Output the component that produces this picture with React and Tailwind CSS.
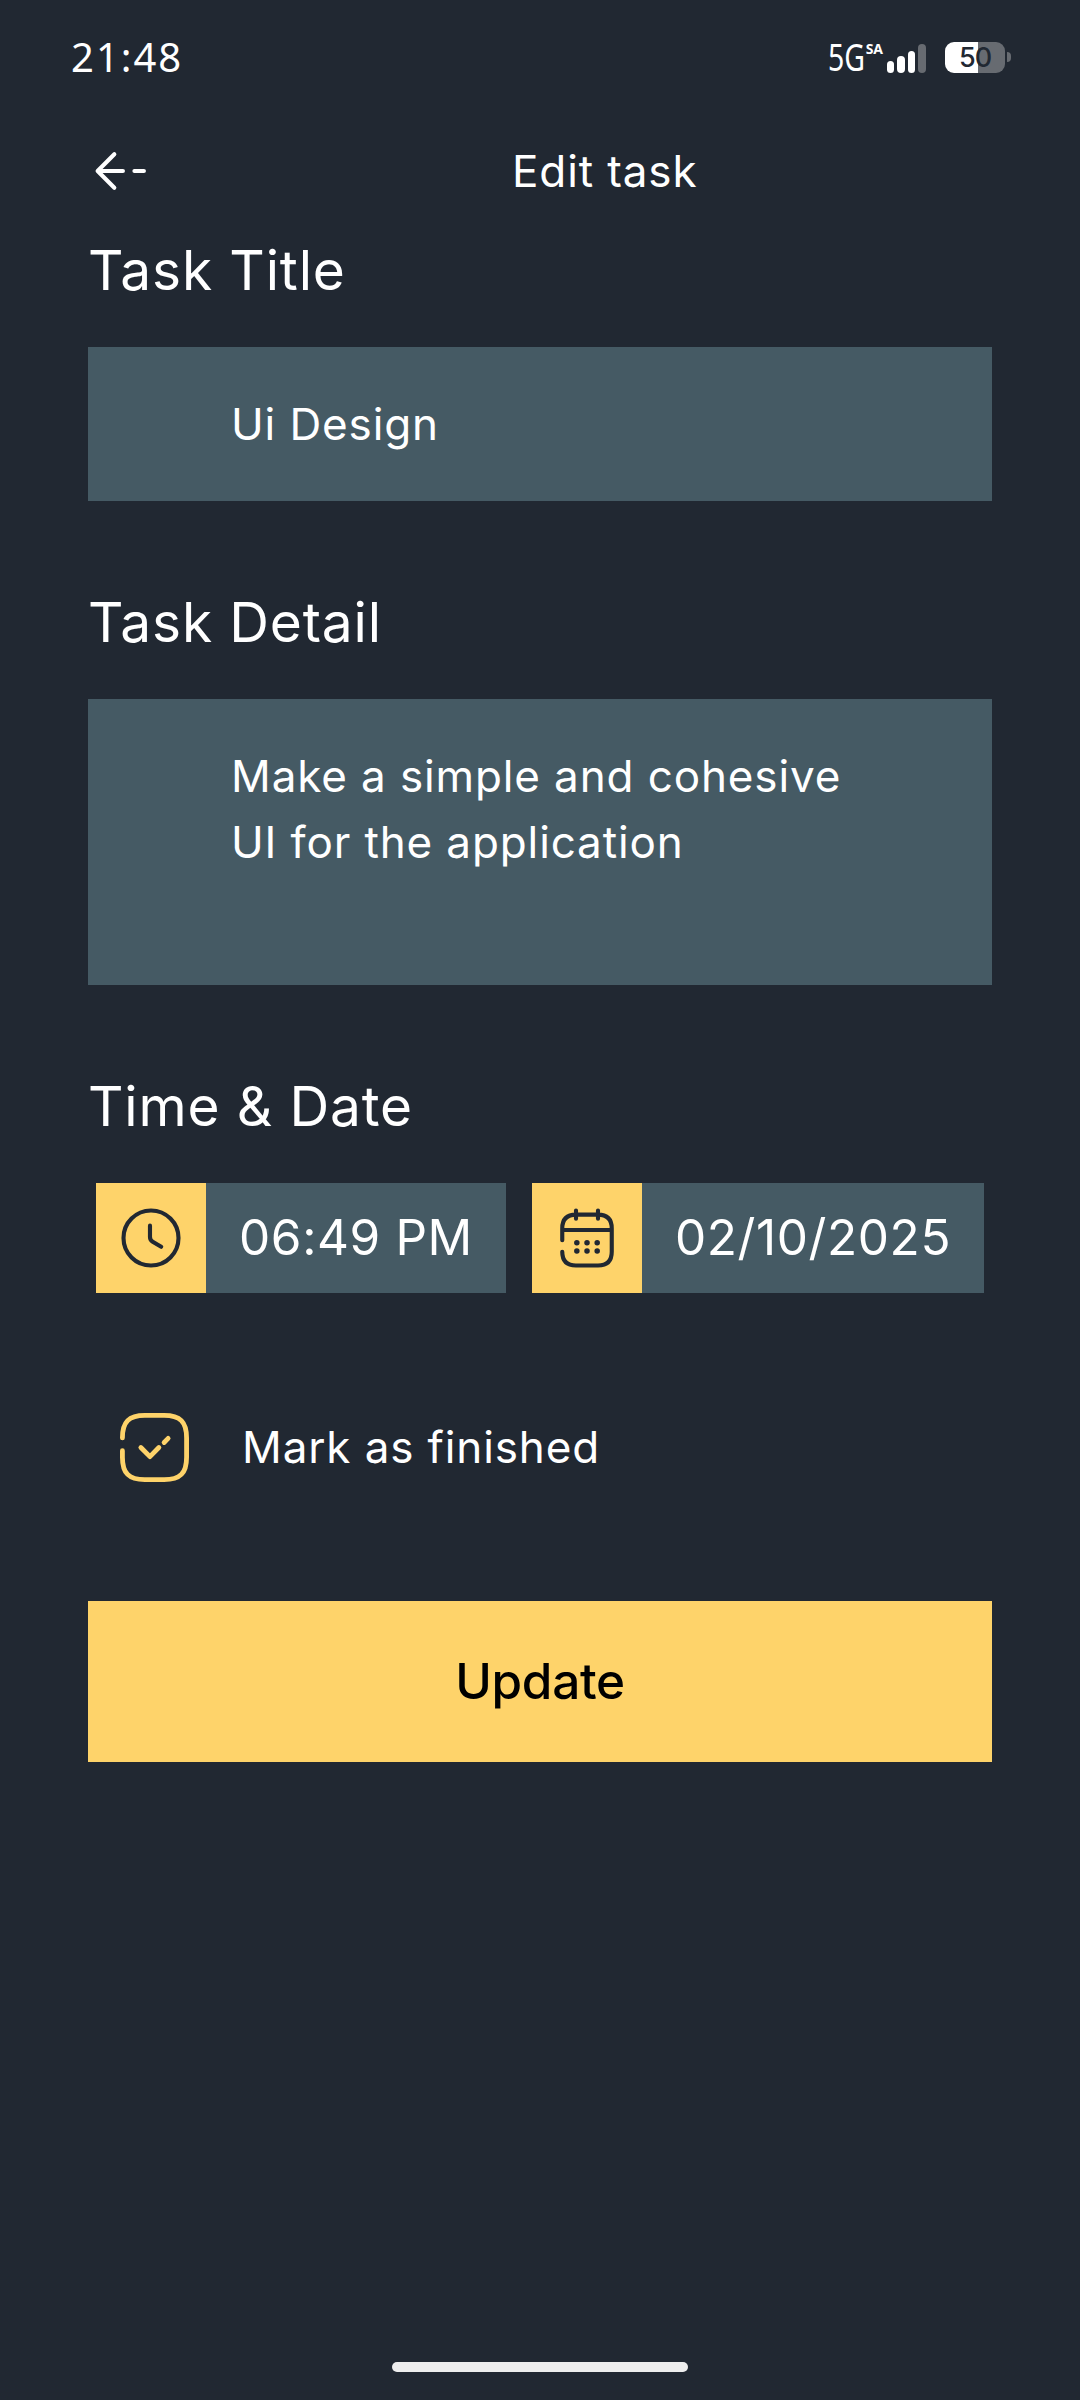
function Icon({ className, children }) {
  return (
    <svg
      viewBox="0 0 24 24"
      fill="none"
      stroke="currentColor"
      strokeWidth="1.5"
      strokeLinecap="round"
      strokeLinejoin="round"
      className={className}
    >
      {children}
    </svg>
  );
}

function StatusBar() {
  return (
    <div className="flex h-[114px] items-center justify-between pl-[71px] pr-[69px]">
      <span className="font-['Noto_Sans'] text-[40px] leading-none tracking-[2px]">21:48</span>
      <div className="flex h-[31px] items-end">
        <span className="w-[38px] origin-left scale-x-[0.75] whitespace-nowrap font-['Noto_Sans'] text-[38px] leading-[34px]">
          5G
        </span>
        <span className="mr-[3px] w-[18px] self-start font-['Noto_Sans'] text-[14px] font-bold leading-[14px]">SA</span>
        <div className="flex items-end gap-[3px]">
          <i className="h-[12px] w-[7.6px] rounded-full bg-white" />
          <i className="h-[17px] w-[7.6px] rounded-full bg-white" />
          <i className="h-[22px] w-[7.6px] rounded-full bg-white" />
          <i className="h-[29px] w-[7.6px] rounded-full bg-[#676b71]" />
        </div>
        <div className="ml-[19px] flex h-[31px] w-[60px] items-center justify-center rounded-[9px] bg-linear-to-r from-white from-55% to-[#676b71] to-55% text-[27px] font-medium leading-none tracking-[-1px] text-[#212832]">
          50
        </div>
        <i className="ml-[2px] h-[10px] w-[4px] self-center rounded-r-full bg-[#676b71]" />
      </div>
    </div>
  );
}

function Label({ children }) {
  return <h2 className="flex h-[84px] items-center text-[55px] leading-none tracking-[0.85px]">{children}</h2>;
}

function Picker({ icon, value, className }) {
  return (
    <div className={className}>
      <div className="flex size-[110px] shrink-0 items-center justify-center bg-[#fed36a] text-[#212832]">{icon}</div>
      <span className="flex-1 whitespace-nowrap text-center text-[49.5px] leading-none tracking-[0.6px]">{value}</span>
    </div>
  );
}

export default function App() {
  return (
    <div className="flex h-[2400px] w-[1080px] flex-col overflow-hidden bg-[#212832] font-['Inter',sans-serif] text-white">
      <StatusBar />
      <header className="flex h-[114px] items-center pl-[88px]">
        <Icon className="size-[66px]">
          <path d="M9.57 5.93 3.5 12l6.07 6.07M12.7 12H3.67M20.33 12h-3.45" />
        </Icon>
        <h1 className="ml-[358px] text-[44px] leading-none tracking-[0.88px]">Edit task</h1>
      </header>

      <main className="flex flex-col px-[88px]">
        <Label>Task Title</Label>
        <div className="mb-[79px] mt-[35px] flex h-[154px] items-center bg-[#455a64] pl-[143px] text-[44px] leading-none tracking-[0.88px]">
          Ui Design
        </div>

        <Label>Task Detail</Label>
        <div className="mb-[79px] mt-[35px] h-[286px] bg-[#455a64] pl-[143px] pt-[44px] text-[44px] leading-[66px] tracking-[0.88px]">
          Make a simple and cohesive
          <br />
          UI for the application
        </div>

        <Label>Time &amp; Date</Label>
        <div className="mt-[35px] flex gap-[26px] px-[8px]">
          <Picker
            className="flex h-[110px] w-[410px] items-center bg-[#455a64]"
            value="06:49 PM"
            icon={
              <Icon className="size-[66px]">
                <circle cx="12" cy="12" r="10" />
                <path d="m15.71 15.18-3.1-1.85c-.54-.32-.98-1.09-.98-1.72v-4.1" />
              </Icon>
            }
          />
          <Picker
            className="flex h-[110px] w-[452px] items-center bg-[#455a64]"
            value="02/10/2025"
            icon={
              <Icon className="size-[66px]">
                <path d="M8 2v3M16 2v3M3.5 9.09h17M3 12.8V8.5c0-3 1.5-5 5-5h8c3.5 0 5 2 5 5V17c0 3-1.5 5-5 5H8c-3.5 0-5-2-5-5" />
                <path
                  strokeWidth="2"
                  d="M8.3 13.7h.01M12 13.7h.01M15.7 13.7h.01M8.3 16.7h.01M12 16.7h.01M15.7 16.7h.01"
                />
              </Icon>
            }
          />
        </div>

        <div className="flex h-[308px] items-center pl-[28px]">
          <Icon className="size-[77px] text-[#fed36a]">
            <path d="M2 12.98V15c0 5 2 7 7 7h6c5 0 7-2 7-7V9c0-5-2-7-7-7H9C4 2 2 4 2 9" />
            <path d="m7.75 12 2.83 2.83 2.78-2.81M15 10.42l1.25-1.25" />
          </Icon>
          <span className="ml-[49px] text-[44px] leading-none tracking-[0.88px]">Mark as finished</span>
        </div>

        <button className="h-[161px] bg-[#fed36a] text-[49.5px] font-medium leading-none tracking-[-0.3px] text-black">
          Update
        </button>
      </main>

      <div className="mb-[28px] mt-auto h-[10px] w-[296px] self-center rounded-full bg-[#eeeeee]" />
    </div>
  );
}
